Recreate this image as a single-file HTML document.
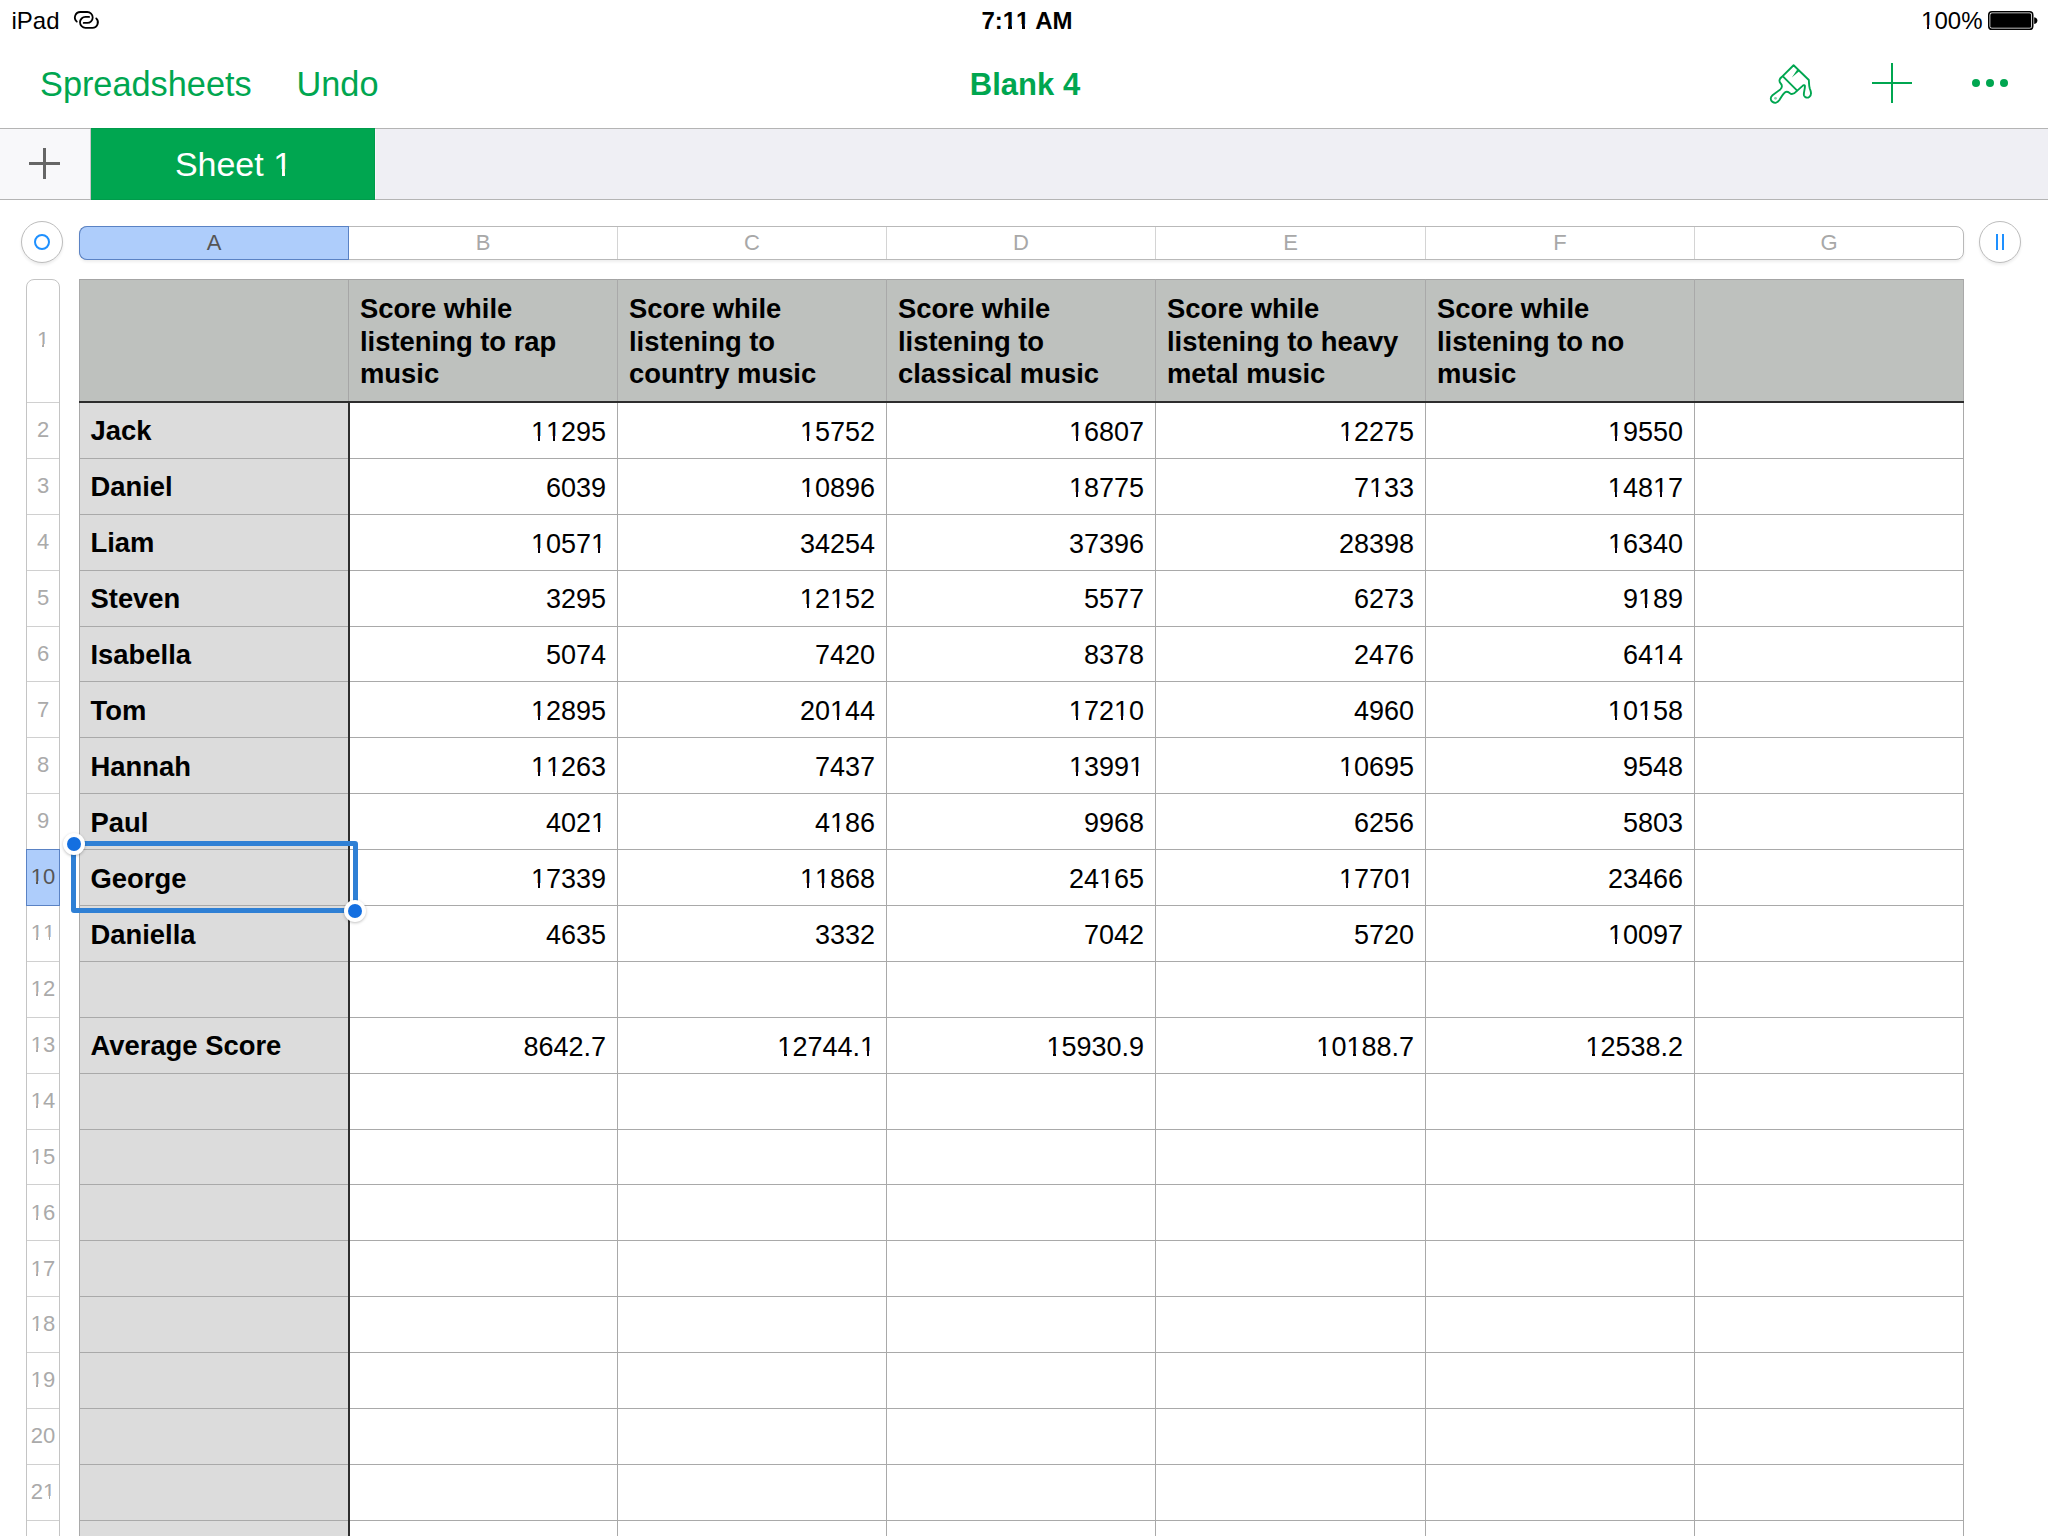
<!DOCTYPE html>
<html><head><meta charset="utf-8"><title>Blank 4 - Numbers</title>
<style>
html,body{margin:0;padding:0;}
body{width:2048px;height:1536px;position:relative;overflow:hidden;background:#fff;font-family:"Liberation Sans", sans-serif;}
.t{position:absolute;white-space:nowrap;}
.a{position:absolute;}
.o{position:relative;}
.o::before,.o::after{content:"";position:absolute;bottom:0.13em;height:0.26em;background:var(--bg,#fff);}
.o::before{left:0;width:0.25em;}
.o::after{left:0.34em;width:0.21em;}
.ob{position:relative;}
.ob::before,.ob::after{content:"";position:absolute;bottom:0.13em;height:0.28em;background:var(--bg,#fff);}
.ob::before{left:0;width:0.23em;}
.ob::after{left:0.37em;width:0.18em;}
</style></head><body>

<div class="t" style="left:11.5px;top:6.68px;font-size:24px;line-height:28.8px;font-weight:400;color:#000;">iPad</div>
<svg class="a" style="left:70px;top:6px" width="34" height="26" viewBox="0 0 34 26">
<g fill="none" stroke="#000" stroke-width="1.8" stroke-linecap="round">
<path d="M6.77 15.56 A5.45 5.45 0 0 1 10.35 6.0 L17.25 6.0 A5.45 5.45 0 0 1 17.25 16.9 L13.7 16.9"/>
<path d="M19.1 10.9 L15.45 10.9 A5.45 5.45 0 0 0 15.45 21.8 L22.45 21.8 A5.45 5.45 0 0 0 26.24 12.43"/>
</g></svg>
<div class="t" style="left:527px;width:1000px;text-align:center;top:6.68px;font-size:24px;line-height:28.8px;font-weight:700;color:#000;">7:<span class="ob">1</span><span class="ob">1</span> AM</div>
<div class="t" style="right:65.5px;top:6.98px;font-size:24px;line-height:28.8px;font-weight:400;color:#000;"><span class="o">1</span>00%</div>
<svg class="a" style="left:1986px;top:9px" width="54" height="24" viewBox="0 0 54 24">
<rect x="2.75" y="2.75" width="44" height="17.6" rx="3.2" fill="none" stroke="#000" stroke-width="1.5"/>
<rect x="4.3" y="4.3" width="40.9" height="14.5" rx="1.6" fill="#000"/>
<path d="M48.2 8.2 C50.6 8.4 51.4 10.2 51.4 11.6 C51.4 13.0 50.6 14.8 48.2 15.0 Z" fill="#000"/>
</svg>
<div class="t" style="left:40px;top:63.94px;font-size:34.3px;line-height:41.16px;font-weight:400;color:#00a650;">Spreadsheets</div>
<div class="t" style="left:296.5px;top:63.94px;font-size:34.3px;line-height:41.16px;font-weight:400;color:#00a650;">Undo</div>
<div class="t" style="left:525px;width:1000px;text-align:center;top:65.56px;font-size:31px;line-height:37.2px;font-weight:700;color:#00a650;">Blank 4</div>
<svg class="a" style="left:1760px;top:55px" width="70" height="60" viewBox="0 0 1792 1536">
<g fill="none" stroke="#00a650" stroke-width="48" stroke-linejoin="round" stroke-linecap="round">
<path d="M860 262 L1250 640 C1258 720 1250 790 1275 860 C1320 960 1310 1040 1260 1075 C1210 1110 1140 1090 1125 1030 C1110 960 1155 880 1150 790 C1140 760 1110 770 1090 790 L940 925 C880 990 810 1020 760 975 C720 945 690 930 650 950 C600 980 540 1080 490 1160 C450 1220 380 1240 320 1200 C260 1160 260 1080 320 1030 L520 880 C575 830 570 770 530 730 C480 680 490 610 560 560 Z"/>
<path d="M600 560 L945 905"/>
</g>
<path d="M968 352 L1018 402 L815 575 Z" fill="#00a650"/>
<circle cx="397" cy="1110" r="36" fill="#00a650" opacity="0.5"/>
</svg>
<div class="a" style="left:1872px;top:82px;width:40px;height:2.2px;background:#00a650"></div>
<div class="a" style="left:1891px;top:63px;width:2.2px;height:40px;background:#00a650"></div>
<div class="a" style="left:1971.9px;top:78.80000000000001px;width:8.2px;height:8.2px;border-radius:50%;background:#00a650"></div>
<div class="a" style="left:1985.9px;top:78.80000000000001px;width:8.2px;height:8.2px;border-radius:50%;background:#00a650"></div>
<div class="a" style="left:1999.9px;top:78.80000000000001px;width:8.2px;height:8.2px;border-radius:50%;background:#00a650"></div>
<div class="a" style="left:0;top:128px;width:2048px;height:1px;background:#b4b4b4"></div>
<div class="a" style="left:0;top:129px;width:2048px;height:70px;background:#efeff4"></div>
<div class="a" style="left:0;top:129px;width:91px;height:70px;background:#f8f8fa"></div>
<div class="a" style="left:0;top:199px;width:2048px;height:1px;background:#b4b4b4"></div>
<div class="a" style="left:29px;top:162px;width:31px;height:3px;background:#666"></div>
<div class="a" style="left:43px;top:148px;width:3px;height:31px;background:#666"></div>
<div class="a" style="box-sizing:border-box;left:91px;top:128px;width:284px;height:72px;background:#00a650;border:1px solid #009b4b;border-left:none"></div>
<div class="a" style="left:375px;top:129px;width:1px;height:70px;background:#f8f6fa"></div>
<div class="a" style="left:90px;top:129px;width:1px;height:70px;background:#c8c4c8"></div>
<div class="t" style="left:-266.5px;width:1000px;text-align:center;top:143.72px;font-size:34px;line-height:40.8px;font-weight:400;color:#fff;--bg:#00a650;">Sheet <span class="o">1</span></div>
<div class="a" style="left:79px;top:226px;width:1883px;height:32px;border:1px solid #b9b9b9;border-radius:8px;background:#fff;box-shadow:0 2px 3px rgba(0,0,0,0.07)"></div>
<div class="a" style="left:79px;top:226px;width:269px;height:32px;border:1px solid #5a82c4;border-right:none;border-radius:8px 0 0 8px;background:#aecdfb"></div>
<div class="a" style="left:348px;top:226px;width:1px;height:34px;background:#5a82c4"></div>
<div class="a" style="left:617px;top:227px;width:1px;height:32px;background:#d4d4d4"></div>
<div class="a" style="left:886px;top:227px;width:1px;height:32px;background:#d4d4d4"></div>
<div class="a" style="left:1155px;top:227px;width:1px;height:32px;background:#d4d4d4"></div>
<div class="a" style="left:1425px;top:227px;width:1px;height:32px;background:#d4d4d4"></div>
<div class="a" style="left:1694px;top:227px;width:1px;height:32px;background:#d4d4d4"></div>
<div class="t" style="left:-286.0px;width:1000px;text-align:center;top:229.68px;font-size:22px;line-height:26.4px;font-weight:400;color:#555;">A</div>
<div class="t" style="left:-17.0px;width:1000px;text-align:center;top:229.68px;font-size:22px;line-height:26.4px;font-weight:400;color:#a8a8a8;">B</div>
<div class="t" style="left:252.0px;width:1000px;text-align:center;top:229.68px;font-size:22px;line-height:26.4px;font-weight:400;color:#a8a8a8;">C</div>
<div class="t" style="left:521.0px;width:1000px;text-align:center;top:229.68px;font-size:22px;line-height:26.4px;font-weight:400;color:#a8a8a8;">D</div>
<div class="t" style="left:790.5px;width:1000px;text-align:center;top:229.68px;font-size:22px;line-height:26.4px;font-weight:400;color:#a8a8a8;">E</div>
<div class="t" style="left:1060.0px;width:1000px;text-align:center;top:229.68px;font-size:22px;line-height:26.4px;font-weight:400;color:#a8a8a8;">F</div>
<div class="t" style="left:1329.0px;width:1000px;text-align:center;top:229.68px;font-size:22px;line-height:26.4px;font-weight:400;color:#a8a8a8;">G</div>
<div class="a" style="left:21px;top:221px;width:40px;height:40px;border:1px solid #bdbdbd;border-radius:50%;background:#fff;box-shadow:0 2px 3px rgba(0,0,0,0.08)"></div>
<div class="a" style="left:34.2px;top:234.2px;width:12px;height:12px;border:2px solid #1e90ff;border-radius:50%"></div>
<div class="a" style="left:1979px;top:221px;width:40px;height:40px;border:1px solid #bdbdbd;border-radius:50%;background:#fff;box-shadow:0 2px 3px rgba(0,0,0,0.08)"></div>
<div class="a" style="left:1996px;top:234px;width:2px;height:16px;background:#1e90ff"></div>
<div class="a" style="left:2002px;top:234px;width:2px;height:16px;background:#1e90ff"></div>
<div class="a" style="left:26px;top:279px;width:32px;height:1300px;border:1px solid #c4c4c4;border-radius:8px 8px 0 0;background:#fff"></div>
<div class="a" style="left:26px;top:849px;width:32px;height:55px;border:1px solid #5a82c4;background:#aecdfb"></div>
<div class="a" style="left:27px;top:402px;width:32px;height:1px;background:#d0d0d0"></div>
<div class="a" style="left:27px;top:458px;width:32px;height:1px;background:#d0d0d0"></div>
<div class="a" style="left:27px;top:514px;width:32px;height:1px;background:#d0d0d0"></div>
<div class="a" style="left:27px;top:570px;width:32px;height:1px;background:#d0d0d0"></div>
<div class="a" style="left:27px;top:626px;width:32px;height:1px;background:#d0d0d0"></div>
<div class="a" style="left:27px;top:681px;width:32px;height:1px;background:#d0d0d0"></div>
<div class="a" style="left:27px;top:737px;width:32px;height:1px;background:#d0d0d0"></div>
<div class="a" style="left:27px;top:793px;width:32px;height:1px;background:#d0d0d0"></div>
<div class="a" style="left:27px;top:961px;width:32px;height:1px;background:#d0d0d0"></div>
<div class="a" style="left:27px;top:1017px;width:32px;height:1px;background:#d0d0d0"></div>
<div class="a" style="left:27px;top:1073px;width:32px;height:1px;background:#d0d0d0"></div>
<div class="a" style="left:27px;top:1129px;width:32px;height:1px;background:#d0d0d0"></div>
<div class="a" style="left:27px;top:1184px;width:32px;height:1px;background:#d0d0d0"></div>
<div class="a" style="left:27px;top:1240px;width:32px;height:1px;background:#d0d0d0"></div>
<div class="a" style="left:27px;top:1296px;width:32px;height:1px;background:#d0d0d0"></div>
<div class="a" style="left:27px;top:1352px;width:32px;height:1px;background:#d0d0d0"></div>
<div class="a" style="left:27px;top:1408px;width:32px;height:1px;background:#d0d0d0"></div>
<div class="a" style="left:27px;top:1464px;width:32px;height:1px;background:#d0d0d0"></div>
<div class="a" style="left:27px;top:1520px;width:32px;height:1px;background:#d0d0d0"></div>
<div class="t" style="left:-457px;width:1000px;text-align:center;top:327.18px;font-size:22px;line-height:26.4px;font-weight:400;color:#aaaaaa;--bg:#fff;"><span class="o">1</span></div>
<div class="t" style="left:-457px;width:1000px;text-align:center;top:417.03px;font-size:22px;line-height:26.4px;font-weight:400;color:#aaaaaa;--bg:#fff;">2</div>
<div class="t" style="left:-457px;width:1000px;text-align:center;top:472.93px;font-size:22px;line-height:26.4px;font-weight:400;color:#aaaaaa;--bg:#fff;">3</div>
<div class="t" style="left:-457px;width:1000px;text-align:center;top:528.83px;font-size:22px;line-height:26.4px;font-weight:400;color:#aaaaaa;--bg:#fff;">4</div>
<div class="t" style="left:-457px;width:1000px;text-align:center;top:584.73px;font-size:22px;line-height:26.4px;font-weight:400;color:#aaaaaa;--bg:#fff;">5</div>
<div class="t" style="left:-457px;width:1000px;text-align:center;top:640.63px;font-size:22px;line-height:26.4px;font-weight:400;color:#aaaaaa;--bg:#fff;">6</div>
<div class="t" style="left:-457px;width:1000px;text-align:center;top:696.53px;font-size:22px;line-height:26.4px;font-weight:400;color:#aaaaaa;--bg:#fff;">7</div>
<div class="t" style="left:-457px;width:1000px;text-align:center;top:752.43px;font-size:22px;line-height:26.4px;font-weight:400;color:#aaaaaa;--bg:#fff;">8</div>
<div class="t" style="left:-457px;width:1000px;text-align:center;top:808.33px;font-size:22px;line-height:26.4px;font-weight:400;color:#aaaaaa;--bg:#fff;">9</div>
<div class="t" style="left:-457px;width:1000px;text-align:center;top:864.23px;font-size:22px;line-height:26.4px;font-weight:400;color:#555;--bg:#aecdfb;"><span class="o">1</span>0</div>
<div class="t" style="left:-457px;width:1000px;text-align:center;top:920.13px;font-size:22px;line-height:26.4px;font-weight:400;color:#aaaaaa;--bg:#fff;"><span class="o">1</span><span class="o">1</span></div>
<div class="t" style="left:-457px;width:1000px;text-align:center;top:976.03px;font-size:22px;line-height:26.4px;font-weight:400;color:#aaaaaa;--bg:#fff;"><span class="o">1</span>2</div>
<div class="t" style="left:-457px;width:1000px;text-align:center;top:1031.93px;font-size:22px;line-height:26.4px;font-weight:400;color:#aaaaaa;--bg:#fff;"><span class="o">1</span>3</div>
<div class="t" style="left:-457px;width:1000px;text-align:center;top:1087.83px;font-size:22px;line-height:26.4px;font-weight:400;color:#aaaaaa;--bg:#fff;"><span class="o">1</span>4</div>
<div class="t" style="left:-457px;width:1000px;text-align:center;top:1143.73px;font-size:22px;line-height:26.4px;font-weight:400;color:#aaaaaa;--bg:#fff;"><span class="o">1</span>5</div>
<div class="t" style="left:-457px;width:1000px;text-align:center;top:1199.63px;font-size:22px;line-height:26.4px;font-weight:400;color:#aaaaaa;--bg:#fff;"><span class="o">1</span>6</div>
<div class="t" style="left:-457px;width:1000px;text-align:center;top:1255.53px;font-size:22px;line-height:26.4px;font-weight:400;color:#aaaaaa;--bg:#fff;"><span class="o">1</span>7</div>
<div class="t" style="left:-457px;width:1000px;text-align:center;top:1311.43px;font-size:22px;line-height:26.4px;font-weight:400;color:#aaaaaa;--bg:#fff;"><span class="o">1</span>8</div>
<div class="t" style="left:-457px;width:1000px;text-align:center;top:1367.33px;font-size:22px;line-height:26.4px;font-weight:400;color:#aaaaaa;--bg:#fff;"><span class="o">1</span>9</div>
<div class="t" style="left:-457px;width:1000px;text-align:center;top:1423.23px;font-size:22px;line-height:26.4px;font-weight:400;color:#aaaaaa;--bg:#fff;">20</div>
<div class="t" style="left:-457px;width:1000px;text-align:center;top:1479.13px;font-size:22px;line-height:26.4px;font-weight:400;color:#aaaaaa;--bg:#fff;">2<span class="o">1</span></div>
<div class="t" style="left:-457px;width:1000px;text-align:center;top:1535.03px;font-size:22px;line-height:26.4px;font-weight:400;color:#aaaaaa;--bg:#fff;">22</div>
<div class="a" style="left:79px;top:279px;width:1885px;height:122px;background:#bec1be"></div>
<div class="a" style="left:79px;top:403px;width:269px;height:1200px;background:#dcdcdc"></div>
<div class="a" style="left:79px;top:279px;width:1885px;height:1px;background:#a4a4a4"></div>
<div class="a" style="left:79px;top:458px;width:1885px;height:1px;background:#a9a9a9"></div>
<div class="a" style="left:79px;top:514px;width:1885px;height:1px;background:#a9a9a9"></div>
<div class="a" style="left:79px;top:570px;width:1885px;height:1px;background:#a9a9a9"></div>
<div class="a" style="left:79px;top:626px;width:1885px;height:1px;background:#a9a9a9"></div>
<div class="a" style="left:79px;top:681px;width:1885px;height:1px;background:#a9a9a9"></div>
<div class="a" style="left:79px;top:737px;width:1885px;height:1px;background:#a9a9a9"></div>
<div class="a" style="left:79px;top:793px;width:1885px;height:1px;background:#a9a9a9"></div>
<div class="a" style="left:79px;top:849px;width:1885px;height:1px;background:#a9a9a9"></div>
<div class="a" style="left:79px;top:905px;width:1885px;height:1px;background:#a9a9a9"></div>
<div class="a" style="left:79px;top:961px;width:1885px;height:1px;background:#a9a9a9"></div>
<div class="a" style="left:79px;top:1017px;width:1885px;height:1px;background:#a9a9a9"></div>
<div class="a" style="left:79px;top:1073px;width:1885px;height:1px;background:#a9a9a9"></div>
<div class="a" style="left:79px;top:1129px;width:1885px;height:1px;background:#a9a9a9"></div>
<div class="a" style="left:79px;top:1184px;width:1885px;height:1px;background:#a9a9a9"></div>
<div class="a" style="left:79px;top:1240px;width:1885px;height:1px;background:#a9a9a9"></div>
<div class="a" style="left:79px;top:1296px;width:1885px;height:1px;background:#a9a9a9"></div>
<div class="a" style="left:79px;top:1352px;width:1885px;height:1px;background:#a9a9a9"></div>
<div class="a" style="left:79px;top:1408px;width:1885px;height:1px;background:#a9a9a9"></div>
<div class="a" style="left:79px;top:1464px;width:1885px;height:1px;background:#a9a9a9"></div>
<div class="a" style="left:79px;top:1520px;width:1885px;height:1px;background:#a9a9a9"></div>
<div class="a" style="left:79px;top:279px;width:1px;height:1300px;background:#a9a9a9"></div>
<div class="a" style="left:348px;top:280px;width:1px;height:121px;background:#a6a6a6"></div>
<div class="a" style="left:348px;top:403px;width:2px;height:1200px;background:#2f2f2f"></div>
<div class="a" style="left:617px;top:279px;width:1px;height:1300px;background:#a9a9a9"></div>
<div class="a" style="left:886px;top:279px;width:1px;height:1300px;background:#a9a9a9"></div>
<div class="a" style="left:1155px;top:279px;width:1px;height:1300px;background:#a9a9a9"></div>
<div class="a" style="left:1425px;top:279px;width:1px;height:1300px;background:#a9a9a9"></div>
<div class="a" style="left:1694px;top:279px;width:1px;height:1300px;background:#a9a9a9"></div>
<div class="a" style="left:1963px;top:279px;width:1px;height:1300px;background:#a9a9a9"></div>
<div class="a" style="left:79px;top:401px;width:1885px;height:2px;background:#2d2d2d"></div>
<div class="t" style="left:360px;top:292.87px;font-size:27.4px;line-height:32.88px;font-weight:700;color:#000;">Score while</div>
<div class="t" style="left:360px;top:325.62px;font-size:27.4px;line-height:32.88px;font-weight:700;color:#000;">listening to rap</div>
<div class="t" style="left:360px;top:358.37px;font-size:27.4px;line-height:32.88px;font-weight:700;color:#000;">music</div>
<div class="t" style="left:629px;top:292.87px;font-size:27.4px;line-height:32.88px;font-weight:700;color:#000;">Score while</div>
<div class="t" style="left:629px;top:325.62px;font-size:27.4px;line-height:32.88px;font-weight:700;color:#000;">listening to</div>
<div class="t" style="left:629px;top:358.37px;font-size:27.4px;line-height:32.88px;font-weight:700;color:#000;">country music</div>
<div class="t" style="left:898px;top:292.87px;font-size:27.4px;line-height:32.88px;font-weight:700;color:#000;">Score while</div>
<div class="t" style="left:898px;top:325.62px;font-size:27.4px;line-height:32.88px;font-weight:700;color:#000;">listening to</div>
<div class="t" style="left:898px;top:358.37px;font-size:27.4px;line-height:32.88px;font-weight:700;color:#000;">classical music</div>
<div class="t" style="left:1167px;top:292.87px;font-size:27.4px;line-height:32.88px;font-weight:700;color:#000;">Score while</div>
<div class="t" style="left:1167px;top:325.62px;font-size:27.4px;line-height:32.88px;font-weight:700;color:#000;">listening to heavy</div>
<div class="t" style="left:1167px;top:358.37px;font-size:27.4px;line-height:32.88px;font-weight:700;color:#000;">metal music</div>
<div class="t" style="left:1437px;top:292.87px;font-size:27.4px;line-height:32.88px;font-weight:700;color:#000;">Score while</div>
<div class="t" style="left:1437px;top:325.62px;font-size:27.4px;line-height:32.88px;font-weight:700;color:#000;">listening to no</div>
<div class="t" style="left:1437px;top:358.37px;font-size:27.4px;line-height:32.88px;font-weight:700;color:#000;">music</div>
<div class="t" style="left:90.5px;top:415.42px;font-size:27.4px;line-height:32.88px;font-weight:700;color:#000;">Jack</div>
<div class="t" style="right:1442px;top:415.79px;font-size:27px;line-height:32.4px;font-weight:400;color:#000;"><span class="o">1</span><span class="o">1</span>295</div>
<div class="t" style="right:1173px;top:415.79px;font-size:27px;line-height:32.4px;font-weight:400;color:#000;"><span class="o">1</span>5752</div>
<div class="t" style="right:904px;top:415.79px;font-size:27px;line-height:32.4px;font-weight:400;color:#000;"><span class="o">1</span>6807</div>
<div class="t" style="right:634px;top:415.79px;font-size:27px;line-height:32.4px;font-weight:400;color:#000;"><span class="o">1</span>2275</div>
<div class="t" style="right:365px;top:415.79px;font-size:27px;line-height:32.4px;font-weight:400;color:#000;"><span class="o">1</span>9550</div>
<div class="t" style="left:90.5px;top:471.32px;font-size:27.4px;line-height:32.88px;font-weight:700;color:#000;">Daniel</div>
<div class="t" style="right:1442px;top:471.69px;font-size:27px;line-height:32.4px;font-weight:400;color:#000;">6039</div>
<div class="t" style="right:1173px;top:471.69px;font-size:27px;line-height:32.4px;font-weight:400;color:#000;"><span class="o">1</span>0896</div>
<div class="t" style="right:904px;top:471.69px;font-size:27px;line-height:32.4px;font-weight:400;color:#000;"><span class="o">1</span>8775</div>
<div class="t" style="right:634px;top:471.69px;font-size:27px;line-height:32.4px;font-weight:400;color:#000;">7<span class="o">1</span>33</div>
<div class="t" style="right:365px;top:471.69px;font-size:27px;line-height:32.4px;font-weight:400;color:#000;"><span class="o">1</span>48<span class="o">1</span>7</div>
<div class="t" style="left:90.5px;top:527.22px;font-size:27.4px;line-height:32.88px;font-weight:700;color:#000;">Liam</div>
<div class="t" style="right:1442px;top:527.59px;font-size:27px;line-height:32.4px;font-weight:400;color:#000;"><span class="o">1</span>057<span class="o">1</span></div>
<div class="t" style="right:1173px;top:527.59px;font-size:27px;line-height:32.4px;font-weight:400;color:#000;">34254</div>
<div class="t" style="right:904px;top:527.59px;font-size:27px;line-height:32.4px;font-weight:400;color:#000;">37396</div>
<div class="t" style="right:634px;top:527.59px;font-size:27px;line-height:32.4px;font-weight:400;color:#000;">28398</div>
<div class="t" style="right:365px;top:527.59px;font-size:27px;line-height:32.4px;font-weight:400;color:#000;"><span class="o">1</span>6340</div>
<div class="t" style="left:90.5px;top:583.12px;font-size:27.4px;line-height:32.88px;font-weight:700;color:#000;">Steven</div>
<div class="t" style="right:1442px;top:583.49px;font-size:27px;line-height:32.4px;font-weight:400;color:#000;">3295</div>
<div class="t" style="right:1173px;top:583.49px;font-size:27px;line-height:32.4px;font-weight:400;color:#000;"><span class="o">1</span>2<span class="o">1</span>52</div>
<div class="t" style="right:904px;top:583.49px;font-size:27px;line-height:32.4px;font-weight:400;color:#000;">5577</div>
<div class="t" style="right:634px;top:583.49px;font-size:27px;line-height:32.4px;font-weight:400;color:#000;">6273</div>
<div class="t" style="right:365px;top:583.49px;font-size:27px;line-height:32.4px;font-weight:400;color:#000;">9<span class="o">1</span>89</div>
<div class="t" style="left:90.5px;top:639.02px;font-size:27.4px;line-height:32.88px;font-weight:700;color:#000;">Isabella</div>
<div class="t" style="right:1442px;top:639.39px;font-size:27px;line-height:32.4px;font-weight:400;color:#000;">5074</div>
<div class="t" style="right:1173px;top:639.39px;font-size:27px;line-height:32.4px;font-weight:400;color:#000;">7420</div>
<div class="t" style="right:904px;top:639.39px;font-size:27px;line-height:32.4px;font-weight:400;color:#000;">8378</div>
<div class="t" style="right:634px;top:639.39px;font-size:27px;line-height:32.4px;font-weight:400;color:#000;">2476</div>
<div class="t" style="right:365px;top:639.39px;font-size:27px;line-height:32.4px;font-weight:400;color:#000;">64<span class="o">1</span>4</div>
<div class="t" style="left:90.5px;top:694.92px;font-size:27.4px;line-height:32.88px;font-weight:700;color:#000;">Tom</div>
<div class="t" style="right:1442px;top:695.29px;font-size:27px;line-height:32.4px;font-weight:400;color:#000;"><span class="o">1</span>2895</div>
<div class="t" style="right:1173px;top:695.29px;font-size:27px;line-height:32.4px;font-weight:400;color:#000;">20<span class="o">1</span>44</div>
<div class="t" style="right:904px;top:695.29px;font-size:27px;line-height:32.4px;font-weight:400;color:#000;"><span class="o">1</span>72<span class="o">1</span>0</div>
<div class="t" style="right:634px;top:695.29px;font-size:27px;line-height:32.4px;font-weight:400;color:#000;">4960</div>
<div class="t" style="right:365px;top:695.29px;font-size:27px;line-height:32.4px;font-weight:400;color:#000;"><span class="o">1</span>0<span class="o">1</span>58</div>
<div class="t" style="left:90.5px;top:750.82px;font-size:27.4px;line-height:32.88px;font-weight:700;color:#000;">Hannah</div>
<div class="t" style="right:1442px;top:751.19px;font-size:27px;line-height:32.4px;font-weight:400;color:#000;"><span class="o">1</span><span class="o">1</span>263</div>
<div class="t" style="right:1173px;top:751.19px;font-size:27px;line-height:32.4px;font-weight:400;color:#000;">7437</div>
<div class="t" style="right:904px;top:751.19px;font-size:27px;line-height:32.4px;font-weight:400;color:#000;"><span class="o">1</span>399<span class="o">1</span></div>
<div class="t" style="right:634px;top:751.19px;font-size:27px;line-height:32.4px;font-weight:400;color:#000;"><span class="o">1</span>0695</div>
<div class="t" style="right:365px;top:751.19px;font-size:27px;line-height:32.4px;font-weight:400;color:#000;">9548</div>
<div class="t" style="left:90.5px;top:806.72px;font-size:27.4px;line-height:32.88px;font-weight:700;color:#000;">Paul</div>
<div class="t" style="right:1442px;top:807.09px;font-size:27px;line-height:32.4px;font-weight:400;color:#000;">402<span class="o">1</span></div>
<div class="t" style="right:1173px;top:807.09px;font-size:27px;line-height:32.4px;font-weight:400;color:#000;">4<span class="o">1</span>86</div>
<div class="t" style="right:904px;top:807.09px;font-size:27px;line-height:32.4px;font-weight:400;color:#000;">9968</div>
<div class="t" style="right:634px;top:807.09px;font-size:27px;line-height:32.4px;font-weight:400;color:#000;">6256</div>
<div class="t" style="right:365px;top:807.09px;font-size:27px;line-height:32.4px;font-weight:400;color:#000;">5803</div>
<div class="t" style="left:90.5px;top:862.62px;font-size:27.4px;line-height:32.88px;font-weight:700;color:#000;">George</div>
<div class="t" style="right:1442px;top:862.99px;font-size:27px;line-height:32.4px;font-weight:400;color:#000;"><span class="o">1</span>7339</div>
<div class="t" style="right:1173px;top:862.99px;font-size:27px;line-height:32.4px;font-weight:400;color:#000;"><span class="o">1</span><span class="o">1</span>868</div>
<div class="t" style="right:904px;top:862.99px;font-size:27px;line-height:32.4px;font-weight:400;color:#000;">24<span class="o">1</span>65</div>
<div class="t" style="right:634px;top:862.99px;font-size:27px;line-height:32.4px;font-weight:400;color:#000;"><span class="o">1</span>770<span class="o">1</span></div>
<div class="t" style="right:365px;top:862.99px;font-size:27px;line-height:32.4px;font-weight:400;color:#000;">23466</div>
<div class="t" style="left:90.5px;top:918.52px;font-size:27.4px;line-height:32.88px;font-weight:700;color:#000;">Daniella</div>
<div class="t" style="right:1442px;top:918.89px;font-size:27px;line-height:32.4px;font-weight:400;color:#000;">4635</div>
<div class="t" style="right:1173px;top:918.89px;font-size:27px;line-height:32.4px;font-weight:400;color:#000;">3332</div>
<div class="t" style="right:904px;top:918.89px;font-size:27px;line-height:32.4px;font-weight:400;color:#000;">7042</div>
<div class="t" style="right:634px;top:918.89px;font-size:27px;line-height:32.4px;font-weight:400;color:#000;">5720</div>
<div class="t" style="right:365px;top:918.89px;font-size:27px;line-height:32.4px;font-weight:400;color:#000;"><span class="o">1</span>0097</div>
<div class="t" style="left:90.5px;top:1030.32px;font-size:27.4px;line-height:32.88px;font-weight:700;color:#000;">Average Score</div>
<div class="t" style="right:1442px;top:1030.69px;font-size:27px;line-height:32.4px;font-weight:400;color:#000;">8642.7</div>
<div class="t" style="right:1173px;top:1030.69px;font-size:27px;line-height:32.4px;font-weight:400;color:#000;"><span class="o">1</span>2744.<span class="o">1</span></div>
<div class="t" style="right:904px;top:1030.69px;font-size:27px;line-height:32.4px;font-weight:400;color:#000;"><span class="o">1</span>5930.9</div>
<div class="t" style="right:634px;top:1030.69px;font-size:27px;line-height:32.4px;font-weight:400;color:#000;"><span class="o">1</span>0<span class="o">1</span>88.7</div>
<div class="t" style="right:365px;top:1030.69px;font-size:27px;line-height:32.4px;font-weight:400;color:#000;"><span class="o">1</span>2538.2</div>
<div class="a" style="box-sizing:border-box;left:71.3px;top:841.1px;width:286.3px;height:72.4px;border:5.5px solid #2f80d5;border-radius:3px"></div>
<div class="a" style="left:63px;top:833px;width:22px;height:22px;border-radius:50%;background:#fff;box-shadow:0 1px 3px rgba(0,0,0,0.25)"></div>
<div class="a" style="left:67px;top:837px;width:14px;height:14px;border-radius:50%;background:#146fe0"></div>
<div class="a" style="left:344px;top:899.8px;width:22px;height:22px;border-radius:50%;background:#fff;box-shadow:0 1px 3px rgba(0,0,0,0.25)"></div>
<div class="a" style="left:348px;top:903.8px;width:14px;height:14px;border-radius:50%;background:#146fe0"></div>
</body></html>
